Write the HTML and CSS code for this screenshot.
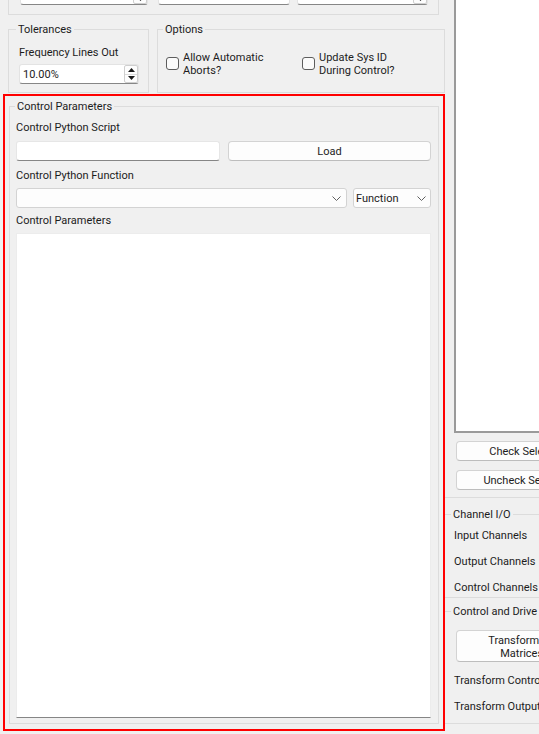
FILE: index.html
```html
<!DOCTYPE html>
<html>
<head>
<meta charset="utf-8">
<link rel="stylesheet" href="styles.css">
</head>
<body>
<div class="app">
  <div class="left">
    <div class="topbox">
      <div class="field spin w1"><span class="ftxt">20</span>
        <span class="spinbtns"><span class="sb"><svg width="7" height="4" viewBox="0 0 7 4"><polygon points="0,4 3.5,0 7,4"/></svg></span><span class="sb"><svg width="7" height="4" viewBox="0 0 7 4"><polygon points="0,0 7,0 3.5,4"/></svg></span></span>
      </div>
      <div class="field w2"><span class="ftxt">Hann</span></div>
      <div class="field spin w3"><span class="ftxt">50.00%</span>
        <span class="spinbtns"><span class="sb"><svg width="7" height="4" viewBox="0 0 7 4"><polygon points="0,4 3.5,0 7,4"/></svg></span><span class="sb"><svg width="7" height="4" viewBox="0 0 7 4"><polygon points="0,0 7,0 3.5,4"/></svg></span></span>
      </div>
    </div>

    <div class="row2">
      <fieldset class="grp tol">
        <legend>Tolerances</legend>
        <div class="tolbody">
          <div class="lbl">Frequency Lines Out</div>
          <div class="field spin tolspin"><span class="ftxt">10.00%</span>
            <span class="spinbtns"><span class="sb"><svg width="7" height="4" viewBox="0 0 7 4"><polygon points="0,4 3.5,0 7,4"/></svg></span><span class="sb"><svg width="7" height="4" viewBox="0 0 7 4"><polygon points="0,0 7,0 3.5,4"/></svg></span></span>
          </div>
        </div>
      </fieldset>
      <fieldset class="grp opts">
        <legend>Options</legend>
        <div class="optbody">
          <label class="chk c1"><span class="box"></span><span class="ctxt">Allow Automatic<br>Aborts?</span></label>
          <label class="chk c2"><span class="box"></span><span class="ctxt">Update Sys ID<br>During Control?</span></label>
        </div>
      </fieldset>
    </div>

    <div class="highlight">
      <fieldset class="grp cp">
        <legend>Control Parameters</legend>
        <div class="cpbody">
          <div class="lbl l1">Control Python Script</div>
          <div class="row r1">
            <div class="edit scriptedit"></div>
            <div class="btn loadbtn">Load</div>
          </div>
          <div class="lbl l2">Control Python Function</div>
          <div class="row r2">
            <div class="combo fcombo">
              <span class="ctext"></span>
              <svg class="chev" width="9" height="5" viewBox="0 0 9 5"><polyline points="0.5,0.5 4.5,4.5 8.5,0.5"/></svg>
            </div>
            <div class="combo fncombo">
              <span class="ctext">Function</span>
              <svg class="chev" width="9" height="5" viewBox="0 0 9 5"><polyline points="0.5,0.5 4.5,4.5 8.5,0.5"/></svg>
            </div>
          </div>
          <div class="lbl l3">Control Parameters</div>
          <div class="params"></div>
        </div>
      </fieldset>
    </div>
  </div>

  <div class="right">
    <div class="g1">
      <div class="list"></div>
      <div class="btn rbtn">Check Selected</div>
      <div class="btn rbtn rbtn2">Uncheck Selected</div>
    </div>
    <fieldset class="grp rgrp g2">
      <legend>Channel I/O</legend>
      <div class="g2body">
        <div class="rrow">Input Channels</div>
        <div class="rrow">Output Channels</div>
        <div class="rrow">Control Channels</div>
      </div>
    </fieldset>
    <fieldset class="grp rgrp g3">
      <legend>Control and Drive</legend>
      <div class="g3body">
        <div class="btn tbtn"><span>Transformation</span><span>Matrices...</span></div>
        <div class="rrow tr1">Transform Control Channels</div>
        <div class="rrow">Transform Output Channels</div>
      </div>
    </fieldset>
  </div>
</div>
</body>
</html>
```
FILE: styles.css
```css
* { box-sizing: border-box; }
html, body { margin: 0; padding: 0; }
body {
  width: 539px;
  height: 734px;
  overflow: hidden;
  background: #f0f0f0;
  font-family: Roboto, "Liberation Sans", sans-serif;
  font-size: 11px;
  color: #1c1c1c;
}
.app { display: flex; align-items: flex-start; width: 760px; }
.left { width: 445px; flex: none; }
.right { width: 300px; flex: none; }

/* generic widgets */
.grp {
  margin: 0;
  padding: 0;
  min-width: 0;
  border: 1px solid #dcdcdc;
}
.grp legend {
  padding: 2px 2px 0;
  line-height: 12px;
  font-size: 11px;
}
.lbl { line-height: 12px; padding-top: 2px; }

.field {
  height: 20px;
  display: flex;
  align-items: center;
  background: #fff;
  border: 1px solid #e3e3e3;
  border-bottom-color: #868686;
  border-radius: 3px;
  padding-left: 3px;
}
.ftxt { padding-top: 1px; }
.spinbtns {
  margin-left: auto;
  width: 14px;
  height: 18px;
  display: flex;
  flex-direction: column;
  border: 1px solid #cfcfcf;
  border-radius: 2px;
  background: #fdfdfd;
}
.sb {
  flex: 1;
  display: flex;
  align-items: center;
  justify-content: center;
}
.sb + .sb { border-top: 1px solid #dcdcdc; }
.sb svg polygon { fill: #1a1a1a; }

.btn {
  display: flex;
  align-items: center;
  justify-content: center;
  height: 20px;
  padding-top: 1px;
  background: #fdfdfd;
  border: 1px solid #d3d3d3;
  border-bottom-color: #bdbdbd;
  border-radius: 4px;
}
.edit {
  height: 20px;
  background: #fff;
  border: 1px solid #e6e6e6;
  border-bottom-color: #868686;
  border-radius: 3px;
}
.combo {
  height: 20px;
  display: flex;
  align-items: center;
  justify-content: space-between;
  background: #fdfdfd;
  border: 1px solid #d3d3d3;
  border-radius: 3px;
}
.ctext { padding-top: 1px; }
.chev polyline { fill: none; stroke: #606060; stroke-width: 1; }

/* top partial group */
.topbox {
  margin: -30px 0 0 8px;
  width: 431px;
  height: 45px;
  border: 1px solid #dcdcdc;
  border-top: none;
  display: flex;
  align-items: flex-end;
  padding: 0 0 9px 11px;
}
.w1 { width: 128px; }
.w2 { width: 132px; margin-left: 10px; }
.w3 { width: 131px; margin-left: 7px; }

/* tolerances / options */
.row2 { display: flex; margin-top: 7px; }
.tol { margin-left: 8px; width: 141px; }
.tol legend { margin-left: 7px; }
.tolbody { padding: 9px 0 8px 10px; }
.tolspin { margin-top: 5px; width: 120px; }
.opts { margin-left: 8px; width: 288px; }
.opts legend { margin-left: 5px; }
.optbody { display: flex; padding: 14px 0 0 8px; }
.chk { display: flex; align-items: center; line-height: 13px; }
.ctxt { padding-top: 1px; }
.c1 { width: 136px; }
.box {
  flex: none;
  width: 13px;
  height: 13px;
  margin-right: 4px;
  border: 1px solid #5d5d5d;
  border-radius: 3px;
  background: #fbfbfb;
}

/* highlighted control parameters */
.highlight {
  margin: 1px 0 0 3px;
  width: 442px;
  height: 637px;
  border: 2px solid #ff0000;
  padding: 3px 4px 0 4px;
}
.cp { width: 430px; }
.cp legend { margin-left: 5px; }
.cpbody { padding: 0 7px 5px 6px; }
.l1 { margin-top: 7px; }
.row { display: flex; }
.r1 { margin-top: 7px; gap: 8px; }
.scriptedit { width: 204px; }
.loadbtn { flex: 1; }
.l2 { margin-top: 7px; }
.r2 { margin-top: 6px; gap: 6px; }
.fcombo { width: 331px; padding: 0 5px 0 3px; }
.fncombo { width: 78px; padding: 0 4px 0 2px; }
.l3 { margin-top: 5px; }
.params {
  margin-top: 6px;
  height: 485px;
  background: #fff;
  border: 1px solid #ececec;
  border-bottom-color: #868686;
}

/* right column */
.g1 {
  margin-top: -20px;
  border-bottom: 1px solid #dcdcdc;
  padding-bottom: 7px;
}
.list {
  margin-left: 9px;
  height: 453px;
  background: #fff;
  border-left: 2px solid #9a9a9a;
  border-bottom: 2px solid #9a9a9a;
}
.rbtn { margin: 8px 0 0 11px; width: 146px; padding-right: 4px; }
.rbtn2 { margin-top: 9px; }
.rgrp { border-left: none; border-right: none; }
.rgrp legend { margin-left: 6px; }
.g2 { margin-top: 9px; }
.g2body { padding: 7px 0 3px; }
.rrow { line-height: 12px; padding-top: 2px; padding-left: 9px; white-space: nowrap; }
.rrow + .rrow { margin-top: 12px; }
.g3 { margin-top: 6px; }
.g3body { padding: 12px 0 10px; }
.tbtn {
  margin-left: 11px;
  width: 146px;
  height: 32px;
  padding-right: 6px;
  flex-direction: column;
  line-height: 13px;
}
.tr1 { margin-top: 11px; }
```
